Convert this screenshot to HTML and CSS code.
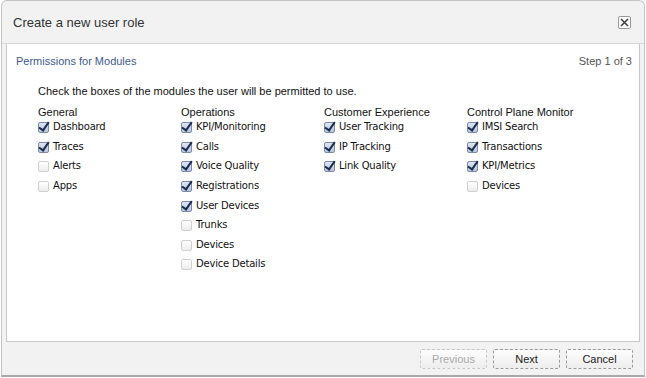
FILE: index.html
```html
<!DOCTYPE html>
<html lang="en">
<head>
  <meta charset="UTF-8">
  <title>Create a new user role</title>
  <link rel="stylesheet" href="styles.css">
</head>
<body>

<!-- Dialog -->
<div class="dialog">
  <div class="dialog-header">
    <div class="dialog-title">Create a new user role</div>
    <div class="close-btn">
      <svg width="9" height="9" viewBox="0 0 9 9"><path d="M1 1 L8 8 M8 1 L1 8" stroke="#444" stroke-width="1.6"/></svg>
    </div>
  </div>

  <div class="panel">
    <div class="panel-top">
      <div class="panel-title">Permissions for Modules</div>
      <div class="step">Step 1 of 3</div>
    </div>

    <div class="intro">Check the boxes of the modules the user will be permitted to use.</div>

    <div class="modules">
      <div class="module-col">
        <div class="module-head">General</div>
        <div class="opt"><span class="box on"></span>Dashboard</div>
        <div class="opt"><span class="box on"></span>Traces</div>
        <div class="opt"><span class="box"></span>Alerts</div>
        <div class="opt"><span class="box"></span>Apps</div>
      </div>
      <div class="module-col">
        <div class="module-head">Operations</div>
        <div class="opt"><span class="box on"></span>KPI/Monitoring</div>
        <div class="opt"><span class="box on"></span>Calls</div>
        <div class="opt"><span class="box on"></span>Voice Quality</div>
        <div class="opt"><span class="box on"></span>Registrations</div>
        <div class="opt"><span class="box on"></span>User Devices</div>
        <div class="opt"><span class="box"></span>Trunks</div>
        <div class="opt"><span class="box"></span>Devices</div>
        <div class="opt"><span class="box"></span>Device Details</div>
      </div>
      <div class="module-col">
        <div class="module-head">Customer Experience</div>
        <div class="opt"><span class="box on"></span>User Tracking</div>
        <div class="opt"><span class="box on"></span>IP Tracking</div>
        <div class="opt"><span class="box on"></span>Link Quality</div>
      </div>
      <div class="module-col">
        <div class="module-head">Control Plane Monitor</div>
        <div class="opt"><span class="box on"></span>IMSI Search</div>
        <div class="opt"><span class="box on"></span>Transactions</div>
        <div class="opt"><span class="box on"></span>KPI/Metrics</div>
        <div class="opt"><span class="box"></span>Devices</div>
      </div>
    </div>
  </div>

  <div class="dialog-footer">
    <button class="btn" disabled>Previous</button>
    <button class="btn">Next</button>
    <button class="btn">Cancel</button>
  </div>
</div>

</body>
</html>
```

FILE: styles.css
```css
body {
  margin: 0;
  background: #fff;
  font-family: 'Liberation Sans', Arial, sans-serif;
}
.dialog {
  width: 644px;
  height: 377px;
  margin-left: 1px;
  background: #f2f2f2;
  border: 1px solid #c4c4c4;
  border-bottom: 2px solid #a8a8a8;
  border-radius: 6px 6px 0 0;
  box-sizing: border-box;
  display: flex;
  flex-direction: column;
}
.dialog-header {
  height: 43px;
  border-bottom: 1px solid #d8d8d8;
  display: flex;
  align-items: center;
  justify-content: space-between;
  padding: 0 13px 0 11px;
  box-sizing: border-box;
}
.dialog-title {
  font-size: 13px;
  color: #333;
}
.close-btn {
  width: 11px;
  height: 11px;
  border: 1px solid #999;
  border-radius: 2px;
  background: #fafafa;
  display: flex;
  align-items: center;
  justify-content: center;
}
.panel {
  margin: 0 4px;
  height: 298px;
  background: #fff;
  border: 1px solid #c8c8c8;
  border-top: none;
  box-sizing: border-box;
  padding: 0 0 0 9px;
}
.panel-top {
  display: flex;
  justify-content: space-between;
  align-items: center;
  height: 34px;
  padding-right: 7px;
  font-size: 11px;
}
.panel-title {
  color: #3d5a8c;
}
.step {
  color: #555;
}
.intro {
  margin: 7px 0 0 22px;
  font-size: 11px;
  color: #111;
}
.modules {
  display: grid;
  grid-template-columns: repeat(4, 143px);
  margin: 10px 0 0 22px;
}
.module-head {
  font-size: 11px;
  color: #111;
  line-height: 10px;
  height: 10px;
}
.opt {
  display: flex;
  align-items: center;
  height: 19.6px;
  font-family: 'DejaVu Sans', sans-serif;
  font-size: 10px;
  letter-spacing: -0.2px;
  color: #111;
}
.box {
  width: 9px;
  height: 9px;
  margin: 2px 4px 0 0;
  border: 1px solid #d0d0d0;
  border-radius: 2px;
  background: linear-gradient(#fff, #ececec);
  position: relative;
}
.box.on {
  border-color: #7a8aa8;
  background: linear-gradient(#dfe6f3, #b9c6de);
}
.box.on::after {
  content: "";
  position: absolute;
  left: 2px;
  top: -3px;
  width: 4px;
  height: 9px;
  border: solid #1c2c4c;
  border-width: 0 2px 2px 0;
  transform: rotate(35deg);
}
.dialog-footer {
  flex: 1;
  display: flex;
  justify-content: flex-end;
  align-items: flex-start;
  gap: 6px;
  padding: 7px 11px 0 0;
}
.btn {
  width: 67px;
  height: 20px;
  font-family: 'Liberation Sans', Arial, sans-serif;
  font-size: 11px;
  color: #222;
  background: linear-gradient(#fdfdfd, #ededed);
  border: 1px dashed #9a9a9a;
  border-radius: 2px;
  padding: 0;
}
.btn:disabled {
  color: #aaa;
  border-color: #c8c8c8;
}
```
